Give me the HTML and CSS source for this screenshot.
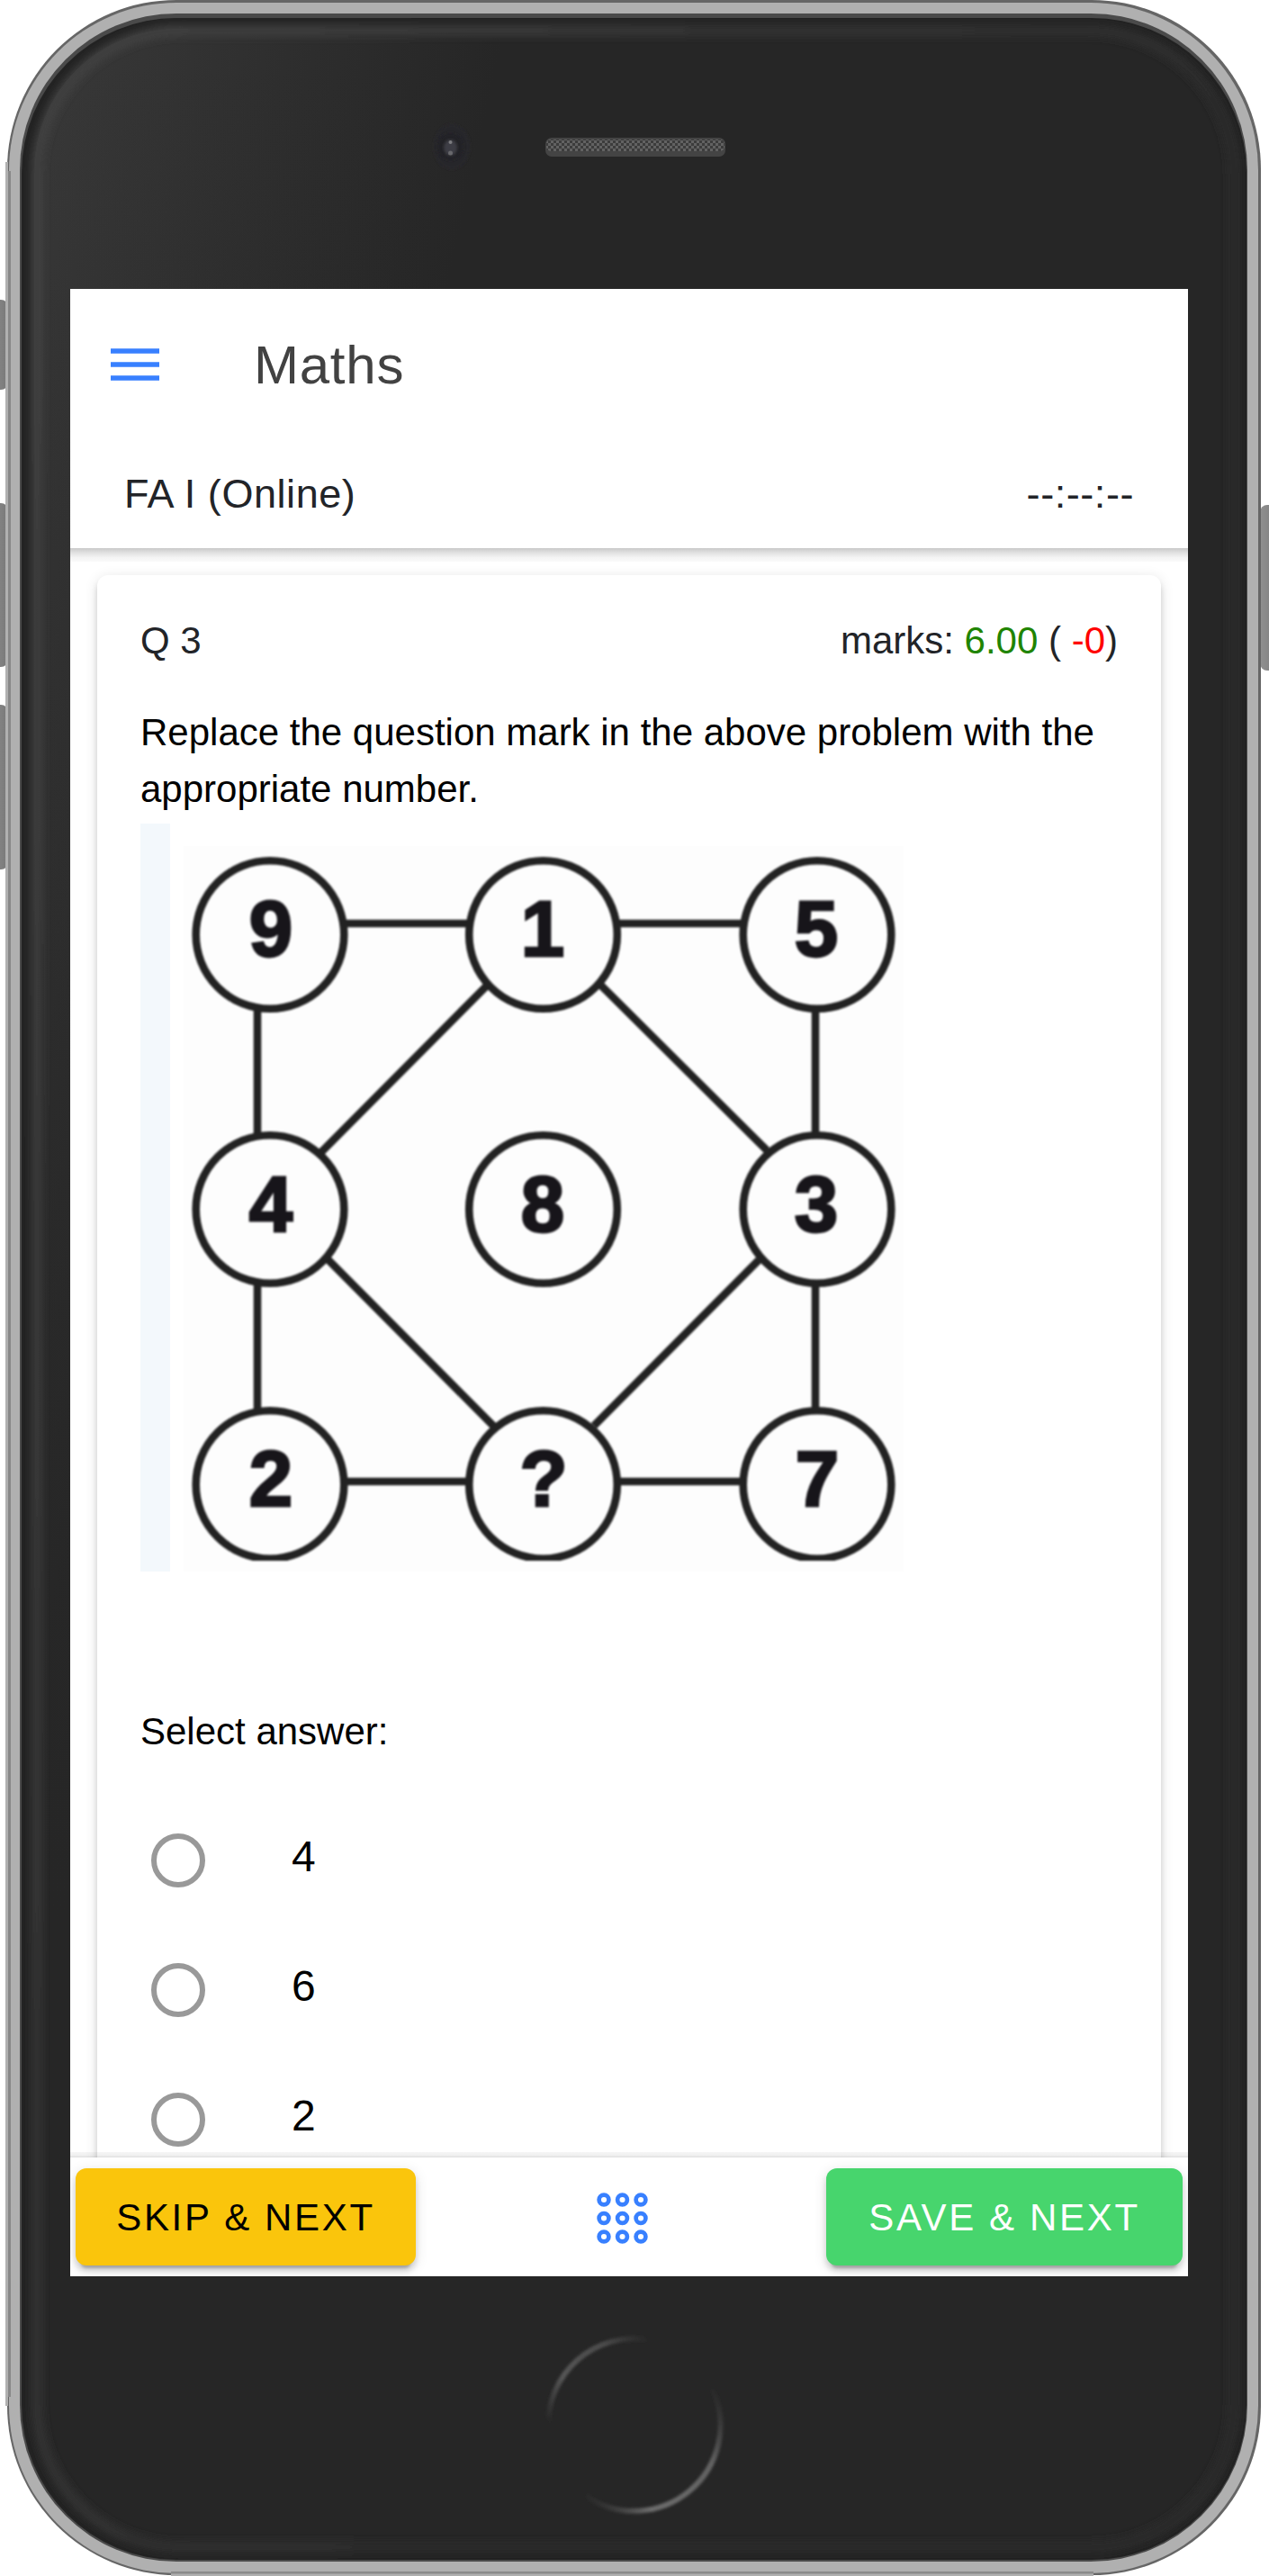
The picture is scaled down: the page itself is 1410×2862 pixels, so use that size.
FILE: index.html
```html
<!DOCTYPE html>
<html lang="en">
<head>
<meta charset="utf-8">
<title>Maths</title>
<link rel="stylesheet" href="styles.css">
</head>
<body>
<div class="device">
  <svg class="shell" viewBox="0 0 1410 2862" aria-hidden="true">
    <defs>
      <linearGradient id="sheen" gradientUnits="userSpaceOnUse" x1="30" y1="300" x2="480" y2="400">
        <stop offset="0" stop-color="#373737"/>
        <stop offset=".5" stop-color="#2e2e2e"/>
        <stop offset="1" stop-color="#262626"/>
      </linearGradient>
      <linearGradient id="fade" x1="0" y1="0" x2="0" y2="1">
        <stop offset="0" stop-color="#262626" stop-opacity="0"/>
        <stop offset=".35" stop-color="#262626" stop-opacity=".25"/>
        <stop offset=".75" stop-color="#262626" stop-opacity="1"/>
      </linearGradient>
      <linearGradient id="rim" gradientUnits="userSpaceOnUse" x1="30" y1="40" x2="1390" y2="500">
        <stop offset="0" stop-color="#424242"/>
        <stop offset=".5" stop-color="#333"/>
        <stop offset="1" stop-color="#2a2a2a"/>
      </linearGradient>
      <linearGradient id="key" x1="0" y1="0" x2="1" y2="0">
        <stop offset="0" stop-color="#909090"/>
        <stop offset="1" stop-color="#787878"/>
      </linearGradient>
      <pattern id="mesh" width="6" height="6" patternUnits="userSpaceOnUse">
        <rect width="6" height="6" fill="#3c3c3c"/>
        <rect width="3" height="3" fill="#626262"/>
        <rect x="3" y="3" width="3" height="3" fill="#626262"/>
      </pattern>
      <linearGradient id="arcTop" gradientUnits="userSpaceOnUse" x1="608" y1="2690" x2="720" y2="2596">
        <stop offset="0" stop-color="#555" stop-opacity="0"/>
        <stop offset=".3" stop-color="#555"/>
        <stop offset=".7" stop-color="#4c4c4c"/>
        <stop offset="1" stop-color="#444" stop-opacity="0"/>
      </linearGradient>
      <linearGradient id="arcBottom" gradientUnits="userSpaceOnUse" x1="794" y1="2652" x2="649" y2="2776">
        <stop offset="0" stop-color="#555" stop-opacity="0"/>
        <stop offset=".3" stop-color="#626262"/>
        <stop offset=".75" stop-color="#6c6c6c"/>
        <stop offset="1" stop-color="#555" stop-opacity="0"/>
      </linearGradient>
      <filter id="soft" x="-10%" y="-10%" width="120%" height="120%"><feGaussianBlur stdDeviation="4"/></filter>
      <filter id="slight" x="-50%" y="-50%" width="200%" height="200%"><feGaussianBlur stdDeviation="1.5"/></filter>
    </defs>

    <!-- side keys -->
    <g fill="url(#key)">
      <rect x="-14" y="333" width="23" height="100" rx="8"/>
      <rect x="-14" y="559" width="23" height="182" rx="8"/>
      <rect x="-14" y="783" width="23" height="183" rx="8"/>
      <rect x="1400" y="561" width="24" height="184" rx="8"/>
    </g>

    <!-- metal edge -->
    <rect x="8" y="0" width="1393" height="2861" rx="188" fill="#666"/>
    <rect x="10" y="3" width="1388" height="2856" rx="186" fill="#b0b0b0"/>
    <path d="M7.500 180V2673" stroke="#b0b0b0" stroke-width="3"/>
    <path d="M10.500 190V2663" stroke="#888" stroke-width="3"/>
    <path d="M190 2858.500H1215" stroke="#8b8b8b" stroke-width="3"/>
    <path d="M190 2861H1215" stroke="#b0b0b0" stroke-width="3"/>
    <rect x="22" y="15" width="1364" height="2831" rx="174" fill="#4a4a4a"/>
    <rect x="24" y="20" width="1361" height="2824" rx="172" fill="#232323"/>

    <!-- glass -->
    <clipPath id="glass"><rect x="24" y="20" width="1361" height="2824" rx="172"/></clipPath>
    <g clip-path="url(#glass)">
      <rect x="38" y="32" width="1340" height="2800" rx="158" fill="url(#sheen)"/>
      <rect x="38" y="42" width="1338" height="2792" rx="158" fill="url(#fade)"/>
      <rect x="41" y="34" width="1330" height="2796" rx="160" fill="none" stroke="url(#rim)" stroke-width="13" filter="url(#soft)"/>
    </g>

    <!-- camera and speaker -->
    <ellipse cx="502" cy="163" rx="20" ry="25" fill="#28272b" filter="url(#slight)"/>
    <circle cx="500.500" cy="163" r="15" fill="#212026" filter="url(#slight)"/>
    <ellipse cx="500.500" cy="164" rx="7.500" ry="9" fill="#3e3e44" filter="url(#slight)"/>
    <circle cx="500.500" cy="158" r="2" fill="#7c7c80"/>
    <circle cx="500.500" cy="170" r="2.500" fill="#68686c"/>
    <rect x="606" y="153" width="200" height="21" rx="7" fill="#444"/>
    <rect x="607" y="155" width="198" height="13" rx="5" fill="url(#mesh)"/>

    <!-- home button -->
    <g fill="none" stroke-width="6" filter="url(#slight)">
      <path d="M609 2694A96 96 0 0 1 718 2599" stroke="url(#arcTop)"/>
      <path d="M792 2654A96 96 0 0 1 651 2773.400" stroke="url(#arcBottom)"/>
    </g>
  </svg>

  <main class="screen">
    <header class="header">
      <div class="toolbar">
        <svg class="menu-icon" viewBox="0 0 54 36"><path d="M0 3H54M0 18H54M0 33H54" stroke="#3880ff" stroke-width="5.500"/></svg>
        <h1 class="title">Maths</h1>
      </div>
      <div class="subbar">
        <span>FA I (Online)</span>
        <span class="timer">--:--:--</span>
      </div>
    </header>

    <section class="content">
      <article class="card">
        <div class="card-head">
          <span>Q 3</span>
          <span>marks: <span class="plus">6.00</span> ( <span class="minus">-0</span>)</span>
        </div>
        <p class="question">Replace the question mark in the above problem with the appropriate number.</p>
        <svg class="figure" viewBox="156 915 864 831">
          <rect x="156" y="915" width="33" height="831" fill="#f3f8fc"/>
          <rect x="204" y="940" width="800" height="806" fill="#fdfdfd"/>
          <g class="drawing">
            <g class="lines">
              <path d="M382 1026H522M686 1026H826M382 1646H522M686 1646H826"/>
              <path d="M286 1118V1262M286 1425V1567M906 1118V1262M906 1425V1567"/>
              <path d="M540 1096L357 1280M667 1094L852 1278M364 1399L549 1585M843 1400L660 1584"/>
            </g>
            <g class="nodes">
              <circle cx="300" cy="1038.500" r="82.300"/><circle cx="603.500" cy="1038.500" r="82.300"/><circle cx="908" cy="1038.500" r="82.300"/>
              <circle cx="300" cy="1343.500" r="82.300"/><circle cx="603.500" cy="1343.500" r="82.300"/><circle cx="908" cy="1343.500" r="82.300"/>
              <clipPath id="cut"><rect x="200" y="1540" width="810" height="194"/></clipPath>
              <g clip-path="url(#cut)">
                <circle cx="300" cy="1649.500" r="82.300"/><circle cx="603.500" cy="1649.500" r="82.300"/><circle cx="908" cy="1649.500" r="82.300"/>
              </g>
            </g>
            <g class="digits">
              <text x="301" y="1062">9</text><text x="603" y="1062">1</text><text x="907" y="1062">5</text>
              <text x="301" y="1368">4</text><text x="603" y="1368">8</text><text x="907" y="1368">3</text>
              <text x="301" y="1673">2</text><text x="604" y="1673">?</text><text x="908" y="1673">7</text>
            </g>
          </g>
        </svg>
        <p class="prompt">Select answer:</p>
        <ul class="options">
          <li class="option"><span class="radio"></span><span class="label">4</span></li>
          <li class="option"><span class="radio"></span><span class="label">6</span></li>
          <li class="option"><span class="radio"></span><span class="label">2</span></li>
        </ul>
      </article>
    </section>

    <footer class="footer">
      <button class="btn skip">SKIP &amp; NEXT</button>
      <svg class="grid-icon" viewBox="0 0 57 57">
        <g fill="none" stroke="#3880ff" stroke-width="4.700">
          <circle cx="8" cy="8" r="5.400"/><circle cx="28.500" cy="8" r="5.400"/><circle cx="49" cy="8" r="5.400"/>
          <circle cx="8" cy="28.500" r="5.400"/><circle cx="28.500" cy="28.500" r="5.400"/><circle cx="49" cy="28.500" r="5.400"/>
          <circle cx="8" cy="49" r="5.400"/><circle cx="28.500" cy="49" r="5.400"/><circle cx="49" cy="49" r="5.400"/>
        </g>
      </svg>
      <button class="btn save">SAVE &amp; NEXT</button>
    </footer>
  </main>
</div>
</body>
</html>
```
FILE: styles.css
```css
* { box-sizing: border-box; }

body {
  margin: 0;
  background: #fff;
  font-family: "Liberation Sans", Arial, sans-serif;
  color: #222428;
}

.device {
  position: relative;
  width: 1410px;
  height: 2862px;
  padding: 321px 90px 333px 78px;
  overflow: hidden;
}

.shell {
  position: absolute;
  inset: 0;
  width: 1410px;
  height: 2862px;
}

.screen {
  position: relative;
  display: flex;
  flex-direction: column;
  height: 2208px;
  background: #fff;
  overflow: hidden;
}

.header {
  position: relative;
  z-index: 1;
  flex: none;
  height: 288px;
  background: #fff;
}

.header::after {
  content: "";
  position: absolute;
  top: 100%;
  left: 0;
  right: 0;
  height: 15px;
  background: linear-gradient(#c9c9c9, #e2e2e2 35%, #f4f4f4 70%, #fafafa);
}

.toolbar {
  display: flex;
  align-items: center;
  height: 168px;
  padding-left: 45px;
}

.menu-icon {
  width: 54px;
  height: 36px;
}

.title {
  margin: 2px 0 0 105px;
  font-size: 60px;
  font-weight: 400;
  line-height: 72px;
  letter-spacing: .75px;
  color: #424242;
}

.subbar {
  display: flex;
  justify-content: space-between;
  align-items: center;
  height: 120px;
  padding: 0 60px;
  font-size: 45px;
  line-height: 54px;
  letter-spacing: .56px;
}

.content {
  flex: 1;
  min-height: 0;
  padding: 30px 30px 0;
  overflow: hidden;
}

.card {
  height: 1900px;
  padding: 49px 48px 48px;
  border-radius: 12px;
  background: #fff;
  box-shadow: 0 9px 3px -6px rgba(0, 0, 0, .2), 0 6px 6px rgba(0, 0, 0, .14), 0 3px 15px rgba(0, 0, 0, .12);
}

.card-head {
  display: flex;
  justify-content: space-between;
  height: 48px;
  font-size: 42px;
  line-height: 48px;
}

.plus { color: #208400; }
.minus { color: #f00; }

.question {
  margin: 46px 0 0;
  font-size: 42px;
  line-height: 63px;
  color: #000;
}

.figure {
  display: block;
  width: 864px;
  height: 831px;
  margin-top: 7px;
}

.drawing { filter: blur(1.3px); }

.lines, .nodes {
  fill: none;
  stroke: #222;
  stroke-width: 8.600px;
}

.digits {
  font-size: 87px;
  font-weight: 700;
  text-anchor: middle;
  fill: #17151a;
  stroke: #17151a;
  stroke-width: 2.800px;
}

.prompt {
  margin: 146px 0 0;
  font-size: 42px;
  line-height: 63px;
  color: #000;
}

.options {
  margin: 40px 0 0;
  padding: 0;
  list-style: none;
}

.option {
  display: flex;
  align-items: center;
  gap: 96px;
  height: 144px;
  padding-left: 12px;
}

.radio {
  width: 60px;
  height: 60px;
  border: 6px solid #999;
  border-radius: 50%;
}

.label {
  margin-top: -9px;
  font-size: 48px;
  line-height: 60px;
  color: #000;
}

.footer {
  position: relative;
  display: flex;
  justify-content: space-between;
  align-items: center;
  flex: none;
  height: 132px;
  padding: 0 6px;
  background: #fff;
}

.footer::before {
  content: "";
  position: absolute;
  bottom: 100%;
  left: 0;
  right: 0;
  height: 6px;
  background: linear-gradient(rgba(0, 0, 0, .04), rgba(0, 0, 0, .06) 60%, rgba(0, 0, 0, .13));
}

.btn {
  height: 108px;
  padding: 0;
  border: 0;
  border-radius: 12px;
  font: 400 42px/110px "Liberation Sans", Arial, sans-serif;
  letter-spacing: 2.65px;
  box-shadow: 0 9px 3px -6px rgba(0, 0, 0, .2), 0 6px 6px rgba(0, 0, 0, .14), 0 3px 15px rgba(0, 0, 0, .12);
}

.skip {
  width: 378px;
  background: #fac50c;
  color: #000;
}

.save {
  width: 396px;
  background: #47d56d;
  color: #fff;
}

.grid-icon {
  width: 57px;
  height: 57px;
  margin: 2px 0 0 2px;
}
```
